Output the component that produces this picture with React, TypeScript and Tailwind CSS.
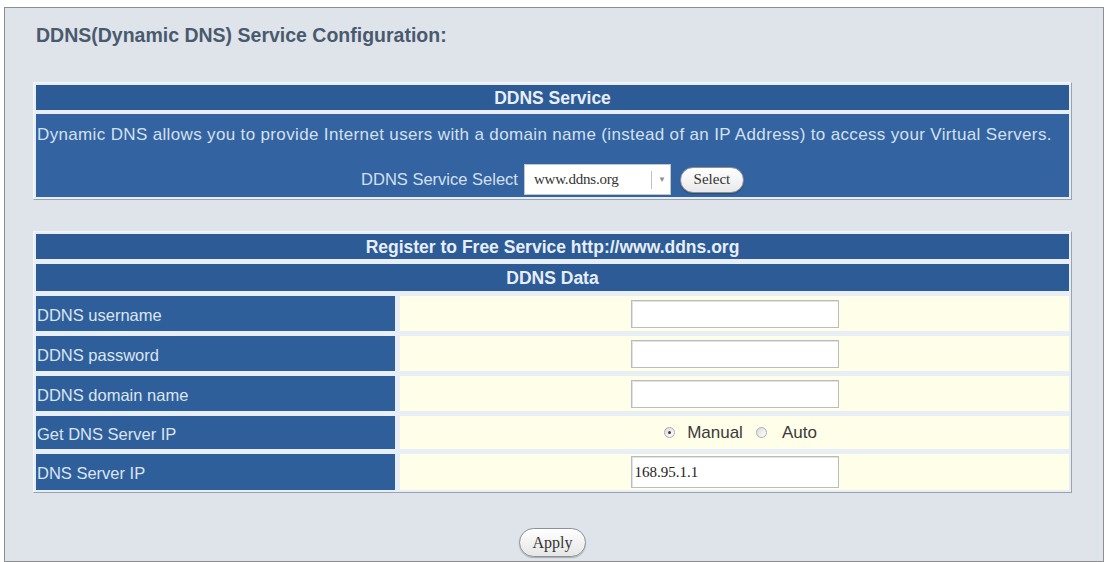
import React from "react";

const sans = { fontFamily: '"Liberation Sans", Arial, sans-serif' };
const serif = { fontFamily: '"Liberation Serif", "Times New Roman", serif' };

function Radio({ checked }: { checked?: boolean }) {
  return (
    <span className="w-[11px] h-[11px] rounded-full border border-[#a9adb3] bg-gradient-to-br from-[#dcdcdc] to-[#ffffff] flex items-center justify-center">
      {checked && <span className="w-[3px] h-[3px] rounded-full bg-[#3d3d3d]" />}
    </span>
  );
}

function TextBox({ value, tall }: { value?: string; tall?: boolean }) {
  return (
    <div
      className={`w-[208px] ${tall ? "h-[32px]" : "h-[28px]"} bg-white border border-[#b9bcc0] shadow-[inset_1px_1px_0_#e2e2e2] flex items-center pl-[3px] text-[15px] text-[#222]`}
      style={serif}
    >
      {value}
    </div>
  );
}

function Row({ label, h, children }: { label: string; h: string; children?: React.ReactNode }) {
  return (
    <div className={`flex gap-[5px] ${h}`}>
      <div className="w-[359px] bg-[#2f5f9a] flex items-center pl-[1px] pt-[3px] text-[16.5px] text-[#dbe5f1]">
        {label}
      </div>
      <div className="flex-1 bg-[#fffee9] flex items-center justify-center">{children}</div>
    </div>
  );
}

export default function App() {
  return (
    <div className="w-[1106px] h-[562px] bg-white pt-[7px] pl-[4px] overflow-hidden" style={sans}>
      <div className="w-[1100px] h-[555px] border border-[#8e8e8e] bg-[#dfe4eb]">
        <div className="mt-[15px] ml-[31px] h-[24px] leading-[24px] text-[19.5px] font-bold text-[#4a5a6e]">
          DDNS(Dynamic DNS) Service Configuration:
        </div>

        {/* Table 1 */}
        <div className="mt-[35px] ml-[28px] w-[1039px] border border-t-[#f3f6fa] border-l-[#f3f6fa] border-b-[#9aa3ad] border-r-[#9aa3ad] bg-[#e8eef5] p-[2px] flex flex-col gap-[4px]">
          <div className="h-[25px] bg-[#2c5b95] flex items-center justify-center text-[17.5px] font-bold text-[#e8eef7] pt-[1px]">
            DDNS Service
          </div>
          <div className="h-[83px] bg-[#3363a0] flex flex-col">
            <div className="pt-[11px] pl-[1px] h-[31px] leading-[20px] text-[17px] tracking-[0.35px] text-[#d3e0f0] whitespace-nowrap">
              Dynamic DNS allows you to provide Internet users with a domain name (instead of an IP Address) to access your Virtual Servers.
            </div>
            <div className="mt-[19px] flex items-center justify-center">
              <span className="text-[16.5px] text-[#d3e0f0] mr-[6px]">DDNS Service Select</span>
              <div className="w-[147px] h-[31px] bg-white border border-[#c2c6cb] flex items-center relative" style={serif}>
                <span className="pl-[9px] text-[15px] text-[#333] tracking-[-0.2px]">www.ddns.org</span>
                <span className="absolute left-[126px] top-[6px] w-[1px] h-[18px] bg-[#bfc3c8]" />
                <span className="absolute left-[133px] top-[9px] text-[8px] text-[#8a8f96]">▼</span>
              </div>
              <div
                className="ml-[9px] w-[64px] h-[26px] rounded-full border border-[#8d9095] bg-gradient-to-b from-[#ffffff] to-[#e9e9e9] shadow-[0_1px_1px_rgba(0,0,0,0.25)] flex items-center justify-center text-[15px] text-[#333]"
                style={serif}
              >
                Select
              </div>
            </div>
          </div>
        </div>

        {/* Table 2 */}
        <div className="mt-[31px] ml-[28px] w-[1039px] border border-t-[#f3f6fa] border-l-[#f3f6fa] border-b-[#9aa3ad] border-r-[#9aa3ad] bg-[#e8eef5] p-[2px] flex flex-col gap-[5px]">
          <div className="h-[25px] bg-[#2c5b95] flex items-center justify-center text-[17.5px] font-bold text-[#e8eef7] pt-[1px]">
            Register to Free Service http://www.ddns.org
          </div>
          <div className="h-[27px] bg-[#2c5b95] flex items-center justify-center text-[17.5px] font-bold text-[#e8eef7] pt-[1px]">
            DDNS Data
          </div>
          <Row label="DDNS username" h="h-[35px]">
            <TextBox />
          </Row>
          <Row label="DDNS password" h="h-[35px]">
            <TextBox />
          </Row>
          <Row label="DDNS domain name" h="h-[35px]">
            <TextBox />
          </Row>
          <Row label="Get DNS Server IP" h="h-[33px]">
            <div className="flex items-center pl-[12px] text-[17px] text-[#3a3a3a]">
              <Radio checked />
              <span className="ml-[12px]">Manual</span>
              <span className="ml-[13px]">
                <Radio />
              </span>
              <span className="ml-[15px]">Auto</span>
            </div>
          </Row>
          <Row label="DNS Server IP" h="h-[36px]">
            <TextBox value="168.95.1.1" tall />
          </Row>
        </div>

        <div className="ml-[28px] w-[1039px] mt-[35px] flex justify-center">
          <div
            className="w-[67px] h-[29px] rounded-full border border-[#8d9095] bg-gradient-to-b from-[#ffffff] to-[#e6e6e6] shadow-[0_1px_1px_rgba(0,0,0,0.25)] flex items-center justify-center text-[16px] text-[#333]"
            style={serif}
          >
            Apply
          </div>
        </div>
      </div>
    </div>
  );
}
